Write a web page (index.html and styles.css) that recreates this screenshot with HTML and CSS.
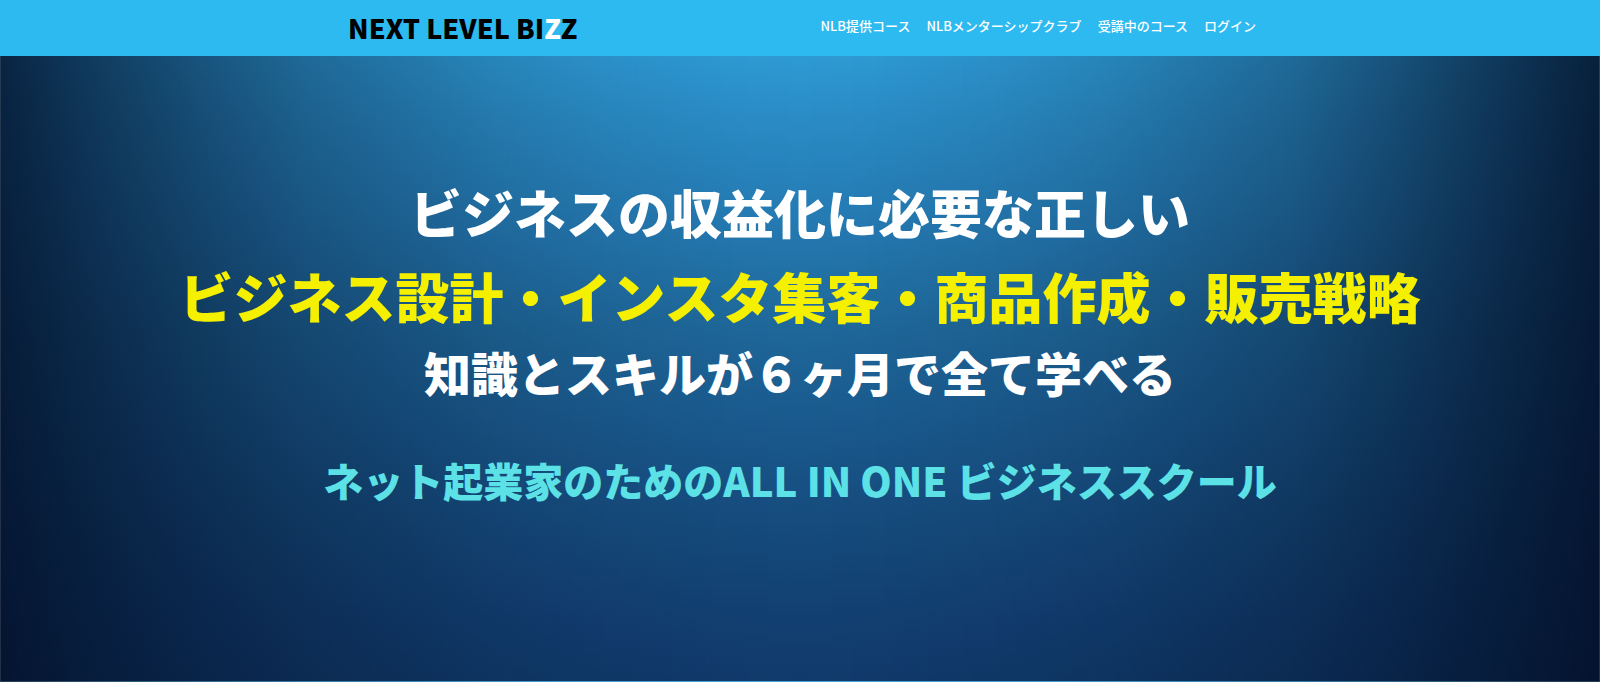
FILE: index.html
```
<!DOCTYPE html>
<html lang="ja">
<head>
    <meta charset="UTF-8">
    <meta name="viewport" content="width=device-width, initial-scale=1">
    <title>NEXT LEVEL BIZZ</title>
    <link rel="stylesheet" href="styles.css">
</head>
<body>
    <header class="header">
        <div class="header-inner">
            <a class="logo" href="#">NEXT LEVEL BI<span>Z</span>Z</a>
            <nav class="nav">
                <a href="#">NLB提供コース</a>
                <a href="#">NLBメンターシップクラブ</a>
                <a href="#">受講中のコース</a>
                <a href="#">ログイン</a>
            </nav>
        </div>
    </header>
    <main class="hero">
        <h1 class="copy">
            <span class="lead">ビジネスの収益化に必要な正しい</span>
            <span class="topics">ビジネス設計・インスタ集客・商品作成・販売戦略</span>
            <span class="period">知識とスキルが６ヶ月で全て学べる</span>
        </h1>
        <p class="school">ネット起業家のためのALL IN ONE ビジネススクール</p>
    </main>
</body>
</html>
```

FILE: styles.css
```
* {
    box-sizing: border-box;
}
body {
    margin: 0;
    min-height: 100vh;
    display: flex;
    flex-direction: column;
    font-family: "Noto Sans CJK JP", sans-serif;
}
.header {
    background-color: #2dbaf0;
}
.header-inner {
    max-width: 912px;
    height: 56px;
    margin: 0 auto;
    padding-left: 4px;
    display: flex;
    align-items: center;
    justify-content: space-between;
}
.logo {
    font-size: 27px;
    font-weight: 900;
    line-height: 56px;
    color: #000;
    text-decoration: none;
}
.logo span {
    color: #fff;
}
.nav {
    display: flex;
    gap: 16px;
    padding-bottom: 4px;
}
.nav a {
    font-size: 13px;
    font-weight: 500;
    line-height: 20px;
    color: #fff;
    text-decoration: none;
}
.hero {
    flex: 1;
    padding: 114px 16px 0;
    text-align: center;
    border: 1px solid rgba(255,255,255,0.12);
    border-top: 0;
    /* dark sides over the top-to-bottom blue */
    background:
        linear-gradient(to right,
            rgba(2,14,38,0.84) 0%,
            rgba(2,14,38,0.67) 6%,
            rgba(2,14,38,0.49) 13%,
            rgba(2,14,38,0.35) 19%,
            rgba(2,14,38,0.25) 25%,
            rgba(2,14,38,0.15) 31%,
            rgba(2,14,38,0.07) 38%,
            rgba(2,14,38,0.01) 46%,
            rgba(2,14,38,0) 50%,
            rgba(2,14,38,0.01) 54%,
            rgba(2,14,38,0.07) 62%,
            rgba(2,14,38,0.15) 69%,
            rgba(2,14,38,0.25) 75%,
            rgba(2,14,38,0.35) 81%,
            rgba(2,14,38,0.51) 87%,
            rgba(2,14,38,0.71) 94%,
            rgba(2,14,38,0.87) 100%),
        linear-gradient(#2e9ad4 0%, #2a8cc5 10%, #2478b0 28%, #1e6799 44%, #1a5a8e 58%, #154a7c 76%, #123f72 90%, #103a6a 100%);
}
.copy {
    margin: 0;
    font-weight: 900;
    color: #fff;
}
.copy span {
    display: block;
}
.lead {
    font-size: 52px;
    line-height: 84px;
}
.copy .topics {
    font-size: 54px;
    line-height: 84px;
    color: #f4f000;
}
.period {
    font-size: 47px;
    line-height: 68px;
}
.school {
    margin: 44px 0 0;
    font-size: 40px;
    font-weight: 900;
    line-height: 60px;
    color: #5ce1e6;
}
```
